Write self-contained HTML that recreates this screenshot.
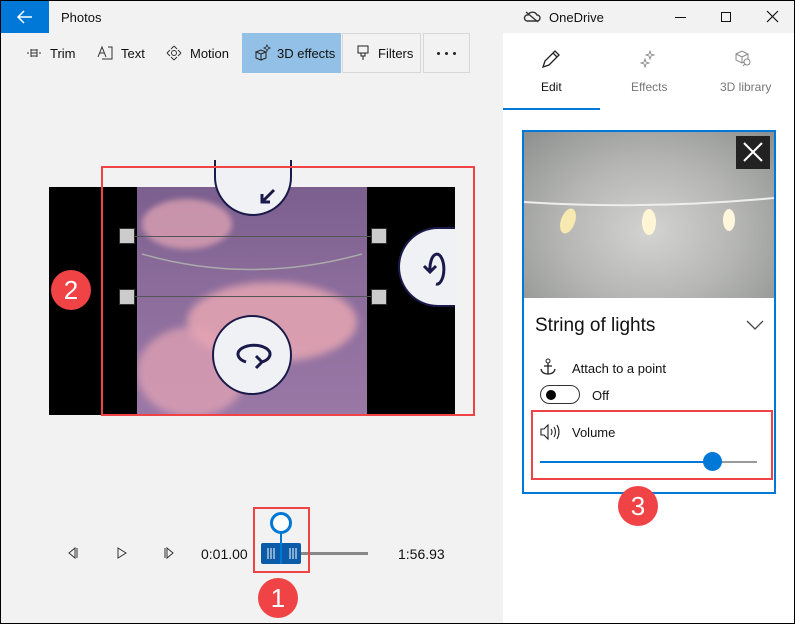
<!DOCTYPE html><html><head><style>
*{margin:0;padding:0;box-sizing:border-box}
body{width:795px;height:624px;background:#000;font-family:"Liberation Sans",sans-serif;position:relative;overflow:hidden}
.a{position:absolute}
.t{position:absolute;font-size:13px;color:#111;white-space:nowrap}
.badge{position:absolute;width:40px;height:40px;border-radius:50%;background:#f04345;color:#fff;font-size:26px;text-align:center;line-height:40px}
svg{overflow:visible}
</style></head><body>
<div class="a" style="left:1px;top:1px;width:793px;height:622px;background:#f2f2f2"></div>
<div class="a" style="left:1px;top:1px;width:48px;height:32px;background:#0078d7"></div>
<svg class="a" style="left:17px;top:10px" width="16" height="14"><path d="M1 7H15M7 1L1 7L7 13" stroke="#fff" stroke-width="1.5" fill="none"/></svg>
<div class="t" style="left:61px;top:10px">Photos</div>
<!-- toolbar -->
<svg class="a" style="left:26px;top:47px" width="16" height="12"><path d="M1 6H3M5 6H11M13 6H15M5 2V10M11 2V10M5 3H11M5 9H11" stroke="#333" stroke-width="1" fill="none"/></svg>
<div class="t" style="left:50px;top:46px">Trim</div>
<svg class="a" style="left:97px;top:45px" width="18" height="16"><path d="M1 12L5 2L9 12M2.5 8H7.5M11 2H15V14H5" stroke="#333" stroke-width="1" fill="none"/></svg>
<div class="t" style="left:121px;top:46px">Text</div>
<svg class="a" style="left:166px;top:45px" width="16" height="16"><path d="M8 1L11 4M8 1L5 4M8 15L11 12M8 15L5 12M1 8L4 5M1 8L4 11M15 8L12 5M15 8L12 11" stroke="#333" fill="none"/><circle cx="8" cy="8" r="2.5" stroke="#333" fill="none"/></svg>
<div class="t" style="left:190px;top:46px">Motion</div>
<div class="a" style="left:242px;top:33px;width:99px;height:40px;background:#93c0e6"></div>
<svg class="a" style="left:254px;top:44px" width="18" height="18"><path d="M2 8L7 6L12 8L7 10Z M2 8V14L7 16V10M12 8V14L7 16" stroke="#222" fill="none"/><path d="M13 1L14 3L16 4L14 5L13 7L12 5L10 4L12 3Z" stroke="#222" stroke-width=".8" fill="none"/></svg>
<div class="t" style="left:277px;top:46px">3D effects</div>
<div class="a" style="left:342px;top:33px;width:79px;height:40px;border:1px solid #d8d8d8"></div>
<svg class="a" style="left:357px;top:45px" width="12" height="16"><path d="M1 1H11V8H1Z M4 8V11H8V8 M6 11V15" stroke="#222" fill="none"/></svg>
<div class="t" style="left:378px;top:46px">Filters</div>
<div class="a" style="left:423px;top:33px;width:47px;height:40px;border:1px solid #d8d8d8"></div>
<div class="a" style="left:437px;top:52px;width:3px;height:3px;background:#222;border-radius:50%"></div>
<div class="a" style="left:445px;top:52px;width:3px;height:3px;background:#222;border-radius:50%"></div>
<div class="a" style="left:453px;top:52px;width:3px;height:3px;background:#222;border-radius:50%"></div>
<!-- window controls -->
<svg class="a" style="left:524px;top:10px" width="16" height="13"><path d="M3 11H13A3 3 0 0 0 13 5A5 5 0 0 0 4 5A3 3 0 0 0 3 11Z M2 2L14 12" stroke="#333" stroke-width="1.4" fill="none"/></svg>
<div class="t" style="left:549px;top:10px">OneDrive</div>
<div class="a" style="left:675px;top:17px;width:11px;height:1px;background:#111"></div>
<div class="a" style="left:721px;top:12px;width:10px;height:10px;border:1px solid #111"></div>
<svg class="a" style="left:767px;top:11px" width="11" height="11"><path d="M0 0L11 11M11 0L0 11" stroke="#111" stroke-width="1.2"/></svg>
<!-- video area -->
<div class="a" style="left:49px;top:187px;width:406px;height:228px;background:#000"></div>
<div class="a" style="left:137px;top:187px;width:230px;height:228px;background:linear-gradient(180deg,#7b5f8e 0%,#8a6b9a 40%,#9a78a6 100%);overflow:hidden">
<div class="a" style="left:5px;top:12px;width:90px;height:50px;border-radius:50%;background:#e7a9b6;opacity:.7;filter:blur(3px)"></div>
<div class="a" style="left:50px;top:95px;width:170px;height:80px;border-radius:50%;background:#eba9b3;opacity:.8;filter:blur(4px)"></div>
<div class="a" style="left:0px;top:140px;width:110px;height:90px;border-radius:50%;background:#e3a3b4;opacity:.75;filter:blur(4px)"></div>
</div>
<div class="a" style="left:214px;top:160px;width:78px;height:56px;border-radius:0 0 39px 39px;background:#f0f1f5;border:2px solid #1a1a4a;border-top:none"></div>
<svg class="a" style="left:258px;top:188px" width="20" height="18"><path d="M16 2L4 14M4 6V14H12" stroke="#1a1a4a" stroke-width="3" fill="none"/></svg>
<div class="a" style="left:212px;top:315px;width:80px;height:80px;border-radius:50%;background:#f0f1f5;border:2px solid #1a1a4a"></div>
<svg class="a" style="left:228px;top:340px" width="50" height="30"><path d="M18 22A16 9 0 1 1 34 22M28 16L34 22L28 28" stroke="#1a1a4a" stroke-width="3" fill="none"/></svg>
<div class="a" style="left:398px;top:227px;width:57px;height:80px;border-radius:40px 0 0 40px;background:#f0f1f5;border:2px solid #1a1a4a;border-right:none"></div>
<svg class="a" style="left:422px;top:248px" width="20" height="40"><path d="M8 24A7 15 0 1 1 14 36M2 18L8 24L14 18" stroke="#1a1a4a" stroke-width="3" fill="none"/></svg>
<div class="a" style="left:133px;top:236px;width:247px;height:1px;background:#555"></div>
<div class="a" style="left:133px;top:296px;width:247px;height:1px;background:#555"></div>
<div class="a" style="left:119px;top:228px;width:16px;height:16px;background:#ccc;border:1px solid #333"></div>
<div class="a" style="left:371px;top:228px;width:16px;height:16px;background:#ccc;border:1px solid #333"></div>
<div class="a" style="left:119px;top:289px;width:16px;height:16px;background:#ccc;border:1px solid #333"></div>
<div class="a" style="left:371px;top:289px;width:16px;height:16px;background:#ccc;border:1px solid #333"></div>
<svg class="a" style="left:140px;top:250px" width="225" height="30"><path d="M2 4Q110 35 222 4" stroke="#aaa" stroke-width="1.5" fill="none"/></svg>
<div class="a" style="left:101px;top:166px;width:374px;height:250px;border:2px solid #f04345"></div>
<div class="badge" style="left:51px;top:270px">2</div>
<!-- playback -->
<svg class="a" style="left:67px;top:547px" width="12" height="12"><path d="M8 1L2 6L8 11Z M10 1V11" stroke="#333" fill="none"/></svg>
<svg class="a" style="left:116px;top:547px" width="12" height="12"><path d="M2 1L10 6L2 11Z" stroke="#333" fill="none"/></svg>
<svg class="a" style="left:163px;top:547px" width="12" height="12"><path d="M4 1L10 6L4 11Z M2 1V11" stroke="#333" fill="none"/></svg>
<div class="t" style="left:201px;top:546px;font-size:14px">0:01.00</div>
<div class="a" style="left:301px;top:552px;width:67px;height:3px;background:#888"></div>
<div class="a" style="left:261px;top:543px;width:40px;height:21px;background:#0b5ba8;border-radius:2px"></div>
<div class="a" style="left:280px;top:530px;width:2px;height:34px;background:#0078d7"></div>
<div class="a" style="left:270px;top:512px;width:22px;height:22px;border-radius:50%;border:3px solid #0078d7;background:#fff"></div>
<svg class="a" style="left:266px;top:547px" width="32" height="13"><path d="M2 1V12M5 1V12M8 1V12M24 1V12M27 1V12M30 1V12" stroke="#fff" stroke-width="1"/></svg>
<div class="t" style="left:398px;top:546px;font-size:14px">1:56.93</div>
<div class="a" style="left:253px;top:507px;width:57px;height:66px;border:2px solid #f04345"></div>
<div class="badge" style="left:258px;top:578px">1</div>
<!-- right panel -->
<div class="a" style="left:503px;top:33px;width:291px;height:590px;background:#fff"></div>
<svg class="a" style="left:541px;top:49px" width="20" height="20"><path d="M2 18L4 12L14 2L18 6L8 16Z M12 4L16 8" stroke="#222" stroke-width="1.3" fill="none"/></svg>
<div class="t" style="left:541px;top:80px;font-size:12px">Edit</div>
<svg class="a" style="left:640px;top:50px" width="16" height="18"><path d="M10 1L11 4L14 5L11 6L10 9L9 6L6 5L9 4Z M5 9L6 12L9 13L6 14L5 17L4 14L1 13L4 12Z" stroke="#888" stroke-width=".9" fill="none"/></svg>
<div class="t" style="left:631px;top:80px;font-size:12px;color:#777">Effects</div>
<svg class="a" style="left:735px;top:50px" width="18" height="18"><path d="M1 4L7 1L13 4V10L7 13L1 10Z M1 4L7 7L13 4 M7 7V13" stroke="#888" fill="none"/><circle cx="12" cy="12" r="3" stroke="#888" fill="#fff"/><path d="M10 14L8 16" stroke="#888"/></svg>
<div class="t" style="left:720px;top:80px;font-size:12px;color:#777">3D library</div>
<div class="a" style="left:503px;top:108px;width:97px;height:2px;background:#0078d7"></div>
<div class="a" style="left:522px;top:130px;width:254px;height:364px;border:2px solid #0078d7"></div>
<div class="a" style="left:524px;top:132px;width:250px;height:166px;background:radial-gradient(ellipse at 50% 60%,#d3d4d2 0%,#b5b6b4 50%,#8d8f8e 100%)"></div>
<svg class="a" style="left:524px;top:190px" width="250" height="50"><path d="M0 12Q120 20 250 8" stroke="#eee" stroke-width="2" fill="none"/><ellipse cx="44" cy="31" rx="7" ry="13" fill="#f7e9b0" transform="rotate(20 44 31)"/><ellipse cx="125" cy="32" rx="7" ry="13" fill="#fff6d5"/><ellipse cx="205" cy="30" rx="6" ry="11" fill="#fff6dc"/></svg>
<div class="a" style="left:736px;top:136px;width:34px;height:33px;background:#222"></div>
<svg class="a" style="left:744px;top:143px" width="18" height="18"><path d="M0 0L18 18M18 0L0 18" stroke="#fff" stroke-width="2"/></svg>
<div class="t" style="left:535px;top:315px;font-size:19px">String of lights</div>
<svg class="a" style="left:746px;top:320px" width="18" height="10"><path d="M1 1L9 9L17 1" stroke="#444" stroke-width="1.3" fill="none"/></svg>
<svg class="a" style="left:540px;top:358px" width="16" height="18"><circle cx="8" cy="3" r="2" stroke="#222" fill="none"/><path d="M8 5V16M4 8H12M1 11Q2 16 8 16Q14 16 15 11" stroke="#222" stroke-width="1.3" fill="none"/></svg>
<div class="t" style="left:572px;top:361px">Attach to a point</div>
<div class="a" style="left:540px;top:385px;width:40px;height:19px;border-radius:10px;border:1px solid #333"></div>
<div class="a" style="left:546px;top:390px;width:10px;height:10px;border-radius:50%;background:#000"></div>
<div class="t" style="left:592px;top:388px">Off</div>
<svg class="a" style="left:540px;top:424px" width="22" height="16"><path d="M1 5H4L8 1V15L4 11H1Z M11 5Q13 8 11 11 M14 3Q17 8 14 13 M17 1Q21 8 17 15" stroke="#222" stroke-width="1.1" fill="none"/></svg>
<div class="t" style="left:572px;top:425px">Volume</div>
<div class="a" style="left:540px;top:461px;width:172px;height:2px;background:#0078d7"></div>
<div class="a" style="left:712px;top:461px;width:45px;height:2px;background:#999"></div>
<div class="a" style="left:703px;top:452px;width:19px;height:19px;border-radius:50%;background:#0078d7"></div>
<div class="a" style="left:531px;top:410px;width:242px;height:70px;border:2px solid #f04345"></div>
<div class="badge" style="left:618px;top:486px">3</div>
</body></html>
